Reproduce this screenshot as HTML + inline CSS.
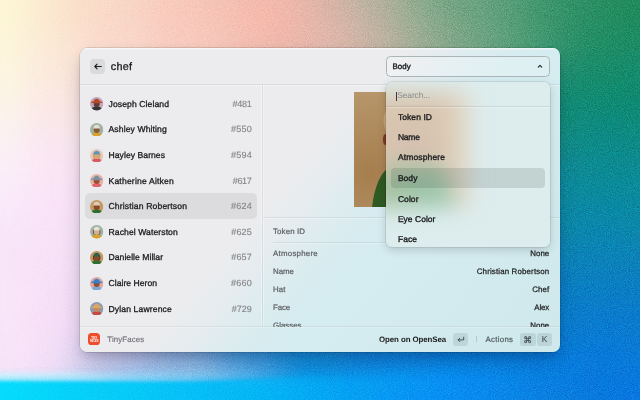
<!DOCTYPE html>
<html lang="en">
<head>
<meta charset="utf-8">
<title>TinyFaces – chef</title>
<style>
html,body{margin:0;padding:0;}
body{width:640px;height:400px;overflow:hidden;position:relative;background:#1a86a0;font-family:"Liberation Sans",sans-serif;}
.t{position:absolute;white-space:nowrap;color:#222;text-rendering:geometricPrecision;}
#shadow{position:absolute;left:80px;top:48.3px;width:480px;height:303.4px;border-radius:7px;box-shadow:0 11px 22px -3px rgba(0,0,30,0.22),0 4px 9px -2px rgba(10,0,50,0.14),0 0 0 0.5px rgba(0,0,0,0.20);}
#win{position:absolute;left:80px;top:48.3px;width:480px;height:303.4px;border-radius:7px;overflow:hidden;
 background:linear-gradient(130.5deg,#ececee 43%,#e5ecef 49.2%,#e0ecef 51.8%,#d7ecf0 58.7%,#d5ecf0 62%,#d3ebef 75%,#cfe8ec 100%);}
#inner{position:absolute;left:-80px;top:-48.3px;width:640px;height:400px;will-change:transform;}
#clip{position:absolute;left:0;top:0;width:640px;height:326.6px;overflow:hidden;}
.hl{position:absolute;background:rgba(0,0,0,0.065);height:1px;box-shadow:0 1px 0 rgba(255,255,255,0.3);}
.vl{position:absolute;background:rgba(0,0,0,0.065);width:1px;}
#back{position:absolute;left:90.2px;top:58.9px;width:15.3px;height:15px;border-radius:4px;background:#d9dbdb;}
.chef{color:#1a1a1c;-webkit-text-stroke:0.3px #1a1a1c;}
.sel{position:absolute;left:85px;top:193.4px;width:172px;height:25.2px;border-radius:5px;background:#dcdcde;}
.av{position:absolute;left:90.3px;}
.nm{color:#202022;-webkit-text-stroke:0.3px #202022;}
.tk{color:#868689;-webkit-text-stroke:0.15px #868689;}
.imgbox{position:absolute;left:353.6px;top:92.4px;width:115px;height:115px;overflow:hidden;background:#b0905f;}
.ml{color:#5e6064;-webkit-text-stroke:0.2px #5e6064;}
.mv{color:#1e2022;-webkit-text-stroke:0.25px #1e2022;}
#dd{position:absolute;left:386.2px;top:56.2px;width:163.4px;height:20.5px;box-sizing:border-box;border:1px solid #aab6b6;border-radius:4.5px;background:rgba(255,255,255,0.22);}
.ddt{color:#1a1a1c;-webkit-text-stroke:0.36px #1a1a1c;}
#popsh{position:absolute;left:385.6px;top:81.5px;width:164.5px;height:165.5px;border-radius:6px;box-shadow:0 0 0 0.6px rgba(0,0,0,0.15),0 3px 10px rgba(0,0,0,0.16);}
#pop{position:absolute;left:385.6px;top:81.5px;width:164.5px;height:165.5px;border-radius:6px;overflow:hidden;background:#d6ecef;}
#popin{position:absolute;left:-385.6px;top:-81.5px;width:640px;height:400px;}
#blurimg{filter:blur(11px);}
#veil{position:absolute;left:380px;top:76px;width:180px;height:180px;background:rgba(227,238,236,0.50);}
.pi{color:#1a1a1c;-webkit-text-stroke:0.34px #1a1a1c;}
.srch{color:#858b89;}
#psel{position:absolute;left:391px;top:168.1px;width:153.5px;height:20px;border-radius:4px;background:rgba(50,70,60,0.15);}
.ftl{color:#707276;-webkit-text-stroke:0.15px #707276;}
.fo{color:#1c1c1e;font-weight:bold;}
.fa{color:#525e62;-webkit-text-stroke:0.2px #525e62;}
.key{position:absolute;top:332.8px;height:12.9px;border-radius:3px;background:rgba(80,115,120,0.16);color:#465256;font-size:8.2px;line-height:12.9px;text-align:center;text-rendering:geometricPrecision;-webkit-text-stroke:0.15px #465256;}
#icon{position:absolute;left:87.9px;top:332.9px;width:12.5px;height:12.6px;border-radius:3.6px;background:#f04b2a;}
</style>
</head>
<body>
<svg id="bg" width="640" height="400" viewBox="0 0 640 400" style="position:absolute;left:0;top:0">
<defs><filter id="b" color-interpolation-filters="sRGB" x="-10%" y="-10%" width="120%" height="120%"><feGaussianBlur stdDeviation="16"/></filter>
<filter id="b2" color-interpolation-filters="sRGB" x="-20%" y="-50%" width="140%" height="200%"><feGaussianBlur stdDeviation="1.6"/></filter>
<filter id="b3" color-interpolation-filters="sRGB" x="-20%" y="-50%" width="140%" height="200%"><feGaussianBlur stdDeviation="9"/></filter>
<linearGradient id="wave" x1="0" x2="640" y1="0" y2="0" gradientUnits="userSpaceOnUse"><stop offset="0" stop-color="#04dcfc"/><stop offset="0.22" stop-color="#06c8f8"/><stop offset="0.47" stop-color="#04aaf4"/><stop offset="0.7" stop-color="#0890f4" stop-opacity="0.9"/><stop offset="0.95" stop-color="#0880e8" stop-opacity="0"/></linearGradient>
<linearGradient id="wave2" x1="0" x2="640" y1="0" y2="0" gradientUnits="userSpaceOnUse"><stop offset="0" stop-color="#04dcfc"/><stop offset="0.22" stop-color="#06c8f8"/><stop offset="0.33" stop-color="#05bcf6"/><stop offset="0.55" stop-color="#04aaf4" stop-opacity="0"/></linearGradient>
<filter id="b5" color-interpolation-filters="sRGB" x="-20%" y="-100%" width="140%" height="300%"><feGaussianBlur stdDeviation="7"/></filter>
<linearGradient id="haze" x1="0" x2="0" y1="350" y2="384" gradientUnits="userSpaceOnUse"><stop offset="0" stop-color="#9cc8f4" stop-opacity="0"/><stop offset="1" stop-color="#9cd0f8" stop-opacity="0.95"/></linearGradient>
<linearGradient id="hfade" x1="0" x2="640" y1="0" y2="0" gradientUnits="userSpaceOnUse"><stop offset="0.09" stop-color="#000"/><stop offset="0.22" stop-color="#fff"/><stop offset="0.30" stop-color="#fff"/><stop offset="0.48" stop-color="#000"/></linearGradient>
<mask id="hm"><rect x="-40" y="300" width="720" height="140" fill="url(#hfade)"/></mask>
<linearGradient id="glow" x1="0" x2="640" y1="0" y2="0" gradientUnits="userSpaceOnUse"><stop offset="0" stop-color="#fbf6ff" stop-opacity="0.95"/><stop offset="0.12" stop-color="#e6f2ff" stop-opacity="0.75"/><stop offset="0.2" stop-color="#c8e8ff" stop-opacity="0.5"/><stop offset="0.32" stop-color="#a0dcff" stop-opacity="0.2"/><stop offset="0.45" stop-color="#a0dcff" stop-opacity="0"/></linearGradient>
<filter id="b4" color-interpolation-filters="sRGB" x="-20%" y="-300%" width="140%" height="700%"><feGaussianBlur stdDeviation="2.5"/></filter>
<filter id="n" color-interpolation-filters="sRGB" x="0" y="0" width="100%" height="100%"><feTurbulence type="fractalNoise" baseFrequency="1.05" numOctaves="2" seed="7" result="t"/><feColorMatrix in="t" type="matrix" values="0.6 0.3 0.1 0 0  0.6 0.3 0.1 0 0  0.6 0.3 0.1 0 0  0 0 0 0 1"/><feComponentTransfer><feFuncR type="linear" slope="2.6" intercept="-0.8"/><feFuncG type="linear" slope="2.6" intercept="-0.8"/><feFuncB type="linear" slope="2.6" intercept="-0.8"/></feComponentTransfer></filter>
</defs>
<g filter="url(#b)">
<rect x="-40" y="-40" width="33" height="33" fill="#fcf5d5"/>
<rect x="-8" y="-40" width="33" height="33" fill="#fcf5d4"/>
<rect x="24" y="-40" width="33" height="33" fill="#fbedd2"/>
<rect x="56" y="-40" width="33" height="33" fill="#f9e3ce"/>
<rect x="88" y="-40" width="33" height="33" fill="#f8dcca"/>
<rect x="120" y="-40" width="33" height="33" fill="#f6d5c6"/>
<rect x="152" y="-40" width="33" height="33" fill="#f4ccbf"/>
<rect x="184" y="-40" width="33" height="33" fill="#f2c6b9"/>
<rect x="216" y="-40" width="33" height="33" fill="#edbfb2"/>
<rect x="248" y="-40" width="33" height="33" fill="#e9b8ab"/>
<rect x="280" y="-40" width="33" height="33" fill="#e5b5a8"/>
<rect x="312" y="-40" width="33" height="33" fill="#d8b4a6"/>
<rect x="344" y="-40" width="33" height="33" fill="#b2b19d"/>
<rect x="376" y="-40" width="33" height="33" fill="#a7af99"/>
<rect x="408" y="-40" width="33" height="33" fill="#79a586"/>
<rect x="440" y="-40" width="33" height="33" fill="#70a382"/>
<rect x="472" y="-40" width="33" height="33" fill="#6aa181"/>
<rect x="504" y="-40" width="33" height="33" fill="#549c78"/>
<rect x="536" y="-40" width="33" height="33" fill="#429770"/>
<rect x="568" y="-40" width="33" height="33" fill="#339169"/>
<rect x="600" y="-40" width="33" height="33" fill="#258d5f"/>
<rect x="632" y="-40" width="33" height="33" fill="#208b5b"/>
<rect x="664" y="-40" width="33" height="33" fill="#258d62"/>
<rect x="-40" y="-8" width="33" height="33" fill="#fcf6d5"/>
<rect x="-8" y="-8" width="33" height="33" fill="#fdf7d5"/>
<rect x="24" y="-8" width="33" height="33" fill="#fcecd1"/>
<rect x="56" y="-8" width="33" height="33" fill="#fbe0ca"/>
<rect x="88" y="-8" width="33" height="33" fill="#fad9c7"/>
<rect x="120" y="-8" width="33" height="33" fill="#f9d4c5"/>
<rect x="152" y="-8" width="33" height="33" fill="#f9c9bb"/>
<rect x="184" y="-8" width="33" height="33" fill="#fac6b8"/>
<rect x="216" y="-8" width="33" height="33" fill="#f5beb1"/>
<rect x="248" y="-8" width="33" height="33" fill="#f9b9ac"/>
<rect x="280" y="-8" width="33" height="33" fill="#eeb7aa"/>
<rect x="312" y="-8" width="33" height="33" fill="#dcb4a8"/>
<rect x="344" y="-8" width="33" height="33" fill="#c4b2a1"/>
<rect x="376" y="-8" width="33" height="33" fill="#abb09a"/>
<rect x="408" y="-8" width="33" height="33" fill="#8baa8e"/>
<rect x="440" y="-8" width="33" height="33" fill="#6ea381"/>
<rect x="472" y="-8" width="33" height="33" fill="#65a17e"/>
<rect x="504" y="-8" width="33" height="33" fill="#4c9a72"/>
<rect x="536" y="-8" width="33" height="33" fill="#389469"/>
<rect x="568" y="-8" width="33" height="33" fill="#2c8f63"/>
<rect x="600" y="-8" width="33" height="33" fill="#238c5d"/>
<rect x="632" y="-8" width="33" height="33" fill="#1e8a58"/>
<rect x="664" y="-8" width="33" height="33" fill="#228c62"/>
<rect x="-40" y="24" width="33" height="33" fill="#fcf4da"/>
<rect x="-8" y="24" width="33" height="33" fill="#fdf6da"/>
<rect x="24" y="24" width="33" height="33" fill="#fcecd7"/>
<rect x="56" y="24" width="33" height="33" fill="#fbe3d0"/>
<rect x="88" y="24" width="33" height="33" fill="#fad9cb"/>
<rect x="120" y="24" width="33" height="33" fill="#fad7ca"/>
<rect x="152" y="24" width="33" height="33" fill="#f8cbbe"/>
<rect x="184" y="24" width="33" height="33" fill="#f8cabe"/>
<rect x="216" y="24" width="33" height="33" fill="#f5c2b6"/>
<rect x="248" y="24" width="33" height="33" fill="#f6b9ad"/>
<rect x="280" y="24" width="33" height="33" fill="#edb7ab"/>
<rect x="312" y="24" width="33" height="33" fill="#e3b8ac"/>
<rect x="344" y="24" width="33" height="33" fill="#d1b5a6"/>
<rect x="376" y="24" width="33" height="33" fill="#b9b2a0"/>
<rect x="408" y="24" width="33" height="33" fill="#99ac94"/>
<rect x="440" y="24" width="33" height="33" fill="#82a889"/>
<rect x="472" y="24" width="33" height="33" fill="#6aa281"/>
<rect x="504" y="24" width="33" height="33" fill="#55a078"/>
<rect x="536" y="24" width="33" height="33" fill="#3c956d"/>
<rect x="568" y="24" width="33" height="33" fill="#268e66"/>
<rect x="600" y="24" width="33" height="33" fill="#1f8c63"/>
<rect x="632" y="24" width="33" height="33" fill="#1f8c65"/>
<rect x="664" y="24" width="33" height="33" fill="#208d6b"/>
<rect x="-40" y="56" width="33" height="33" fill="#fcf4e1"/>
<rect x="-8" y="56" width="33" height="33" fill="#fdf8df"/>
<rect x="24" y="56" width="33" height="33" fill="#fcebdd"/>
<rect x="56" y="56" width="33" height="33" fill="#fae7db"/>
<rect x="88" y="56" width="33" height="33" fill="#f9dbcf"/>
<rect x="120" y="56" width="33" height="33" fill="#f8d7cb"/>
<rect x="152" y="56" width="33" height="33" fill="#f5cec3"/>
<rect x="184" y="56" width="33" height="33" fill="#f6cabe"/>
<rect x="216" y="56" width="33" height="33" fill="#f0c5b9"/>
<rect x="248" y="56" width="33" height="33" fill="#e6bcb0"/>
<rect x="280" y="56" width="33" height="33" fill="#deb8ac"/>
<rect x="312" y="56" width="33" height="33" fill="#ddb7ab"/>
<rect x="344" y="56" width="33" height="33" fill="#ceb5a7"/>
<rect x="376" y="56" width="33" height="33" fill="#b6b1a0"/>
<rect x="408" y="56" width="33" height="33" fill="#9ead97"/>
<rect x="440" y="56" width="33" height="33" fill="#82a78b"/>
<rect x="472" y="56" width="33" height="33" fill="#69a283"/>
<rect x="504" y="56" width="33" height="33" fill="#4f9d79"/>
<rect x="536" y="56" width="33" height="33" fill="#289175"/>
<rect x="568" y="56" width="33" height="33" fill="#198c6c"/>
<rect x="600" y="56" width="33" height="33" fill="#178b69"/>
<rect x="632" y="56" width="33" height="33" fill="#138b70"/>
<rect x="664" y="56" width="33" height="33" fill="#188c73"/>
<rect x="-40" y="88" width="33" height="33" fill="#fbf2e9"/>
<rect x="-8" y="88" width="33" height="33" fill="#fcf6e8"/>
<rect x="24" y="88" width="33" height="33" fill="#fce8e6"/>
<rect x="56" y="88" width="33" height="33" fill="#fae8e4"/>
<rect x="88" y="88" width="33" height="33" fill="#f7e1db"/>
<rect x="120" y="88" width="33" height="33" fill="#f3d9d2"/>
<rect x="152" y="88" width="33" height="33" fill="#efd1c9"/>
<rect x="184" y="88" width="33" height="33" fill="#ebcac2"/>
<rect x="216" y="88" width="33" height="33" fill="#e3c4bc"/>
<rect x="248" y="88" width="33" height="33" fill="#d8beb5"/>
<rect x="280" y="88" width="33" height="33" fill="#ceb9b0"/>
<rect x="312" y="88" width="33" height="33" fill="#c7b6ab"/>
<rect x="344" y="88" width="33" height="33" fill="#bbb3a6"/>
<rect x="376" y="88" width="33" height="33" fill="#a8af9f"/>
<rect x="408" y="88" width="33" height="33" fill="#92aa97"/>
<rect x="440" y="88" width="33" height="33" fill="#79a58f"/>
<rect x="472" y="88" width="33" height="33" fill="#5b9e86"/>
<rect x="504" y="88" width="33" height="33" fill="#32937c"/>
<rect x="536" y="88" width="33" height="33" fill="#0f8a74"/>
<rect x="568" y="88" width="33" height="33" fill="#108b74"/>
<rect x="600" y="88" width="33" height="33" fill="#0d8a72"/>
<rect x="632" y="88" width="33" height="33" fill="#0c8a70"/>
<rect x="664" y="88" width="33" height="33" fill="#138b77"/>
<rect x="-40" y="120" width="33" height="33" fill="#faf0f1"/>
<rect x="-8" y="120" width="33" height="33" fill="#fbf3f3"/>
<rect x="24" y="120" width="33" height="33" fill="#fbe8f1"/>
<rect x="56" y="120" width="33" height="33" fill="#f9e7ed"/>
<rect x="88" y="120" width="33" height="33" fill="#f5e3e6"/>
<rect x="120" y="120" width="33" height="33" fill="#efdcdc"/>
<rect x="152" y="120" width="33" height="33" fill="#e8d4d2"/>
<rect x="184" y="120" width="33" height="33" fill="#dfccc9"/>
<rect x="216" y="120" width="33" height="33" fill="#d4c4c2"/>
<rect x="248" y="120" width="33" height="33" fill="#c7bfbc"/>
<rect x="280" y="120" width="33" height="33" fill="#bcbcba"/>
<rect x="312" y="120" width="33" height="33" fill="#b4b9b6"/>
<rect x="344" y="120" width="33" height="33" fill="#aab4ae"/>
<rect x="376" y="120" width="33" height="33" fill="#99aea4"/>
<rect x="408" y="120" width="33" height="33" fill="#84a79c"/>
<rect x="440" y="120" width="33" height="33" fill="#69a195"/>
<rect x="472" y="120" width="33" height="33" fill="#4b998e"/>
<rect x="504" y="120" width="33" height="33" fill="#2b9187"/>
<rect x="536" y="120" width="33" height="33" fill="#188c81"/>
<rect x="568" y="120" width="33" height="33" fill="#0e8b85"/>
<rect x="600" y="120" width="33" height="33" fill="#0c8a87"/>
<rect x="632" y="120" width="33" height="33" fill="#108b7f"/>
<rect x="664" y="120" width="33" height="33" fill="#138b83"/>
<rect x="-40" y="152" width="33" height="33" fill="#faedf6"/>
<rect x="-8" y="152" width="33" height="33" fill="#fbeff8"/>
<rect x="24" y="152" width="33" height="33" fill="#fbe7f4"/>
<rect x="56" y="152" width="33" height="33" fill="#f9e5f4"/>
<rect x="88" y="152" width="33" height="33" fill="#f6e2f0"/>
<rect x="120" y="152" width="33" height="33" fill="#eddde6"/>
<rect x="152" y="152" width="33" height="33" fill="#e1d4db"/>
<rect x="184" y="152" width="33" height="33" fill="#d4ccd0"/>
<rect x="216" y="152" width="33" height="33" fill="#c5c4c9"/>
<rect x="248" y="152" width="33" height="33" fill="#b7c1c6"/>
<rect x="280" y="152" width="33" height="33" fill="#b0c3c9"/>
<rect x="312" y="152" width="33" height="33" fill="#aec4cb"/>
<rect x="344" y="152" width="33" height="33" fill="#a3bbbf"/>
<rect x="376" y="152" width="33" height="33" fill="#8daeb0"/>
<rect x="408" y="152" width="33" height="33" fill="#74a5a5"/>
<rect x="440" y="152" width="33" height="33" fill="#599d9e"/>
<rect x="472" y="152" width="33" height="33" fill="#3b9599"/>
<rect x="504" y="152" width="33" height="33" fill="#218e98"/>
<rect x="536" y="152" width="33" height="33" fill="#128b9a"/>
<rect x="568" y="152" width="33" height="33" fill="#0d8a92"/>
<rect x="600" y="152" width="33" height="33" fill="#0b8a90"/>
<rect x="632" y="152" width="33" height="33" fill="#0d8a97"/>
<rect x="664" y="152" width="33" height="33" fill="#118a95"/>
<rect x="-40" y="184" width="33" height="33" fill="#f9eaf8"/>
<rect x="-8" y="184" width="33" height="33" fill="#fbecfc"/>
<rect x="24" y="184" width="33" height="33" fill="#fae4fa"/>
<rect x="56" y="184" width="33" height="33" fill="#f9e2f8"/>
<rect x="88" y="184" width="33" height="33" fill="#f7e2f6"/>
<rect x="120" y="184" width="33" height="33" fill="#ecddec"/>
<rect x="152" y="184" width="33" height="33" fill="#dbd4e1"/>
<rect x="184" y="184" width="33" height="33" fill="#c9cad7"/>
<rect x="216" y="184" width="33" height="33" fill="#b8c3cf"/>
<rect x="248" y="184" width="33" height="33" fill="#adc1cc"/>
<rect x="280" y="184" width="33" height="33" fill="#afc7cf"/>
<rect x="312" y="184" width="33" height="33" fill="#b0c8d0"/>
<rect x="344" y="184" width="33" height="33" fill="#a4c0c9"/>
<rect x="376" y="184" width="33" height="33" fill="#84aeba"/>
<rect x="408" y="184" width="33" height="33" fill="#65a2af"/>
<rect x="440" y="184" width="33" height="33" fill="#4a98a8"/>
<rect x="472" y="184" width="33" height="33" fill="#2f91a4"/>
<rect x="504" y="184" width="33" height="33" fill="#168ba2"/>
<rect x="536" y="184" width="33" height="33" fill="#0b8aa2"/>
<rect x="568" y="184" width="33" height="33" fill="#0b8aa1"/>
<rect x="600" y="184" width="33" height="33" fill="#0a8aa0"/>
<rect x="632" y="184" width="33" height="33" fill="#0a8a9e"/>
<rect x="664" y="184" width="33" height="33" fill="#0e899f"/>
<rect x="-40" y="216" width="33" height="33" fill="#f7e7f6"/>
<rect x="-8" y="216" width="33" height="33" fill="#f8e6f8"/>
<rect x="24" y="216" width="33" height="33" fill="#f8e3f8"/>
<rect x="56" y="216" width="33" height="33" fill="#f7e2f7"/>
<rect x="88" y="216" width="33" height="33" fill="#f2e0f4"/>
<rect x="120" y="216" width="33" height="33" fill="#e5d9ed"/>
<rect x="152" y="216" width="33" height="33" fill="#d1d0e4"/>
<rect x="184" y="216" width="33" height="33" fill="#bbc6db"/>
<rect x="216" y="216" width="33" height="33" fill="#a7bed4"/>
<rect x="248" y="216" width="33" height="33" fill="#9fbccf"/>
<rect x="280" y="216" width="33" height="33" fill="#a5c2ce"/>
<rect x="312" y="216" width="33" height="33" fill="#a7c3ce"/>
<rect x="344" y="216" width="33" height="33" fill="#93b9c9"/>
<rect x="376" y="216" width="33" height="33" fill="#70a8c0"/>
<rect x="408" y="216" width="33" height="33" fill="#549cb9"/>
<rect x="440" y="216" width="33" height="33" fill="#3c94b3"/>
<rect x="472" y="216" width="33" height="33" fill="#278daf"/>
<rect x="504" y="216" width="33" height="33" fill="#1789ab"/>
<rect x="536" y="216" width="33" height="33" fill="#0e88a8"/>
<rect x="568" y="216" width="33" height="33" fill="#0b86ae"/>
<rect x="600" y="216" width="33" height="33" fill="#0b85b0"/>
<rect x="632" y="216" width="33" height="33" fill="#0c87a7"/>
<rect x="664" y="216" width="33" height="33" fill="#0f87a8"/>
<rect x="-40" y="248" width="33" height="33" fill="#f6e4f7"/>
<rect x="-8" y="248" width="33" height="33" fill="#f8e4f8"/>
<rect x="24" y="248" width="33" height="33" fill="#f9e2f9"/>
<rect x="56" y="248" width="33" height="33" fill="#f4e0f6"/>
<rect x="88" y="248" width="33" height="33" fill="#ebdbf2"/>
<rect x="120" y="248" width="33" height="33" fill="#dad4ec"/>
<rect x="152" y="248" width="33" height="33" fill="#c2c9e5"/>
<rect x="184" y="248" width="33" height="33" fill="#a7bede"/>
<rect x="216" y="248" width="33" height="33" fill="#8fb5d8"/>
<rect x="248" y="248" width="33" height="33" fill="#80b1d4"/>
<rect x="280" y="248" width="33" height="33" fill="#7db0d1"/>
<rect x="312" y="248" width="33" height="33" fill="#79afce"/>
<rect x="344" y="248" width="33" height="33" fill="#68a7cc"/>
<rect x="376" y="248" width="33" height="33" fill="#519dc8"/>
<rect x="408" y="248" width="33" height="33" fill="#3e95c4"/>
<rect x="440" y="248" width="33" height="33" fill="#2e8ec0"/>
<rect x="472" y="248" width="33" height="33" fill="#2089bd"/>
<rect x="504" y="248" width="33" height="33" fill="#1484bc"/>
<rect x="536" y="248" width="33" height="33" fill="#0e81bd"/>
<rect x="568" y="248" width="33" height="33" fill="#0b81ba"/>
<rect x="600" y="248" width="33" height="33" fill="#0b81b9"/>
<rect x="632" y="248" width="33" height="33" fill="#0c80bd"/>
<rect x="664" y="248" width="33" height="33" fill="#0e82b9"/>
<rect x="-40" y="280" width="33" height="33" fill="#f8e5f8"/>
<rect x="-8" y="280" width="33" height="33" fill="#fae8fa"/>
<rect x="24" y="280" width="33" height="33" fill="#f7e1f8"/>
<rect x="56" y="280" width="33" height="33" fill="#f3ddf6"/>
<rect x="88" y="280" width="33" height="33" fill="#ebd9f3"/>
<rect x="120" y="280" width="33" height="33" fill="#d1ceec"/>
<rect x="152" y="280" width="33" height="33" fill="#b0c0e4"/>
<rect x="184" y="280" width="33" height="33" fill="#8fb4de"/>
<rect x="216" y="280" width="33" height="33" fill="#6fa9db"/>
<rect x="248" y="280" width="33" height="33" fill="#58a2d8"/>
<rect x="280" y="280" width="33" height="33" fill="#499ed6"/>
<rect x="312" y="280" width="33" height="33" fill="#439bd5"/>
<rect x="344" y="280" width="33" height="33" fill="#3a96d4"/>
<rect x="376" y="280" width="33" height="33" fill="#3091d3"/>
<rect x="408" y="280" width="33" height="33" fill="#278dd1"/>
<rect x="440" y="280" width="33" height="33" fill="#1e88ce"/>
<rect x="472" y="280" width="33" height="33" fill="#1785ca"/>
<rect x="504" y="280" width="33" height="33" fill="#0f80c6"/>
<rect x="536" y="280" width="33" height="33" fill="#0a7cc6"/>
<rect x="568" y="280" width="33" height="33" fill="#0a7dc5"/>
<rect x="600" y="280" width="33" height="33" fill="#0a7cc5"/>
<rect x="632" y="280" width="33" height="33" fill="#0a7cc8"/>
<rect x="664" y="280" width="33" height="33" fill="#0d7ec4"/>
<rect x="-40" y="312" width="33" height="33" fill="#f7e4f8"/>
<rect x="-8" y="312" width="33" height="33" fill="#f8e5f9"/>
<rect x="24" y="312" width="33" height="33" fill="#f8e0f8"/>
<rect x="56" y="312" width="33" height="33" fill="#f3dcf6"/>
<rect x="88" y="312" width="33" height="33" fill="#e8d7f3"/>
<rect x="120" y="312" width="33" height="33" fill="#c3c4e8"/>
<rect x="152" y="312" width="33" height="33" fill="#9ab4df"/>
<rect x="184" y="312" width="33" height="33" fill="#7caadc"/>
<rect x="216" y="312" width="33" height="33" fill="#4c9ddc"/>
<rect x="248" y="312" width="33" height="33" fill="#3897db"/>
<rect x="280" y="312" width="33" height="33" fill="#1d91d9"/>
<rect x="312" y="312" width="33" height="33" fill="#1f90da"/>
<rect x="344" y="312" width="33" height="33" fill="#1a8bdc"/>
<rect x="376" y="312" width="33" height="33" fill="#1688dc"/>
<rect x="408" y="312" width="33" height="33" fill="#1586db"/>
<rect x="440" y="312" width="33" height="33" fill="#0f83dc"/>
<rect x="472" y="312" width="33" height="33" fill="#0f82d7"/>
<rect x="504" y="312" width="33" height="33" fill="#0d7fd3"/>
<rect x="536" y="312" width="33" height="33" fill="#0b7dcd"/>
<rect x="568" y="312" width="33" height="33" fill="#0a7bd0"/>
<rect x="600" y="312" width="33" height="33" fill="#097ad3"/>
<rect x="632" y="312" width="33" height="33" fill="#0b7cca"/>
<rect x="664" y="312" width="33" height="33" fill="#0d7dc9"/>
<rect x="-40" y="344" width="33" height="33" fill="#f6e4f8"/>
<rect x="-8" y="344" width="33" height="33" fill="#f9e6fa"/>
<rect x="24" y="344" width="33" height="33" fill="#f6e0f8"/>
<rect x="56" y="344" width="33" height="33" fill="#e4d8f4"/>
<rect x="88" y="344" width="33" height="33" fill="#d6ceee"/>
<rect x="120" y="344" width="33" height="33" fill="#c0bee6"/>
<rect x="152" y="344" width="33" height="33" fill="#88abd9"/>
<rect x="184" y="344" width="33" height="33" fill="#7fa9d9"/>
<rect x="216" y="344" width="33" height="33" fill="#3896dc"/>
<rect x="248" y="344" width="33" height="33" fill="#3095dc"/>
<rect x="280" y="344" width="33" height="33" fill="#0c8cd8"/>
<rect x="312" y="344" width="33" height="33" fill="#128ddb"/>
<rect x="344" y="344" width="33" height="33" fill="#0e85df"/>
<rect x="376" y="344" width="33" height="33" fill="#0c84e0"/>
<rect x="408" y="344" width="33" height="33" fill="#0d83df"/>
<rect x="440" y="344" width="33" height="33" fill="#0880e0"/>
<rect x="472" y="344" width="33" height="33" fill="#0a81de"/>
<rect x="504" y="344" width="33" height="33" fill="#097dde"/>
<rect x="536" y="344" width="33" height="33" fill="#087cdf"/>
<rect x="568" y="344" width="33" height="33" fill="#097ad9"/>
<rect x="600" y="344" width="33" height="33" fill="#0979da"/>
<rect x="632" y="344" width="33" height="33" fill="#0a7ad7"/>
<rect x="664" y="344" width="33" height="33" fill="#0c7bd2"/>
<rect x="-40" y="376" width="33" height="33" fill="#f2e1f6"/>
<rect x="-8" y="376" width="33" height="33" fill="#f3e1f7"/>
<rect x="24" y="376" width="33" height="33" fill="#f2dff7"/>
<rect x="56" y="376" width="33" height="33" fill="#e5d8f4"/>
<rect x="88" y="376" width="33" height="33" fill="#d3cdee"/>
<rect x="120" y="376" width="33" height="33" fill="#bbbfe6"/>
<rect x="152" y="376" width="33" height="33" fill="#94b0dd"/>
<rect x="184" y="376" width="33" height="33" fill="#77a8db"/>
<rect x="216" y="376" width="33" height="33" fill="#439adc"/>
<rect x="248" y="376" width="33" height="33" fill="#2592e0"/>
<rect x="280" y="376" width="33" height="33" fill="#0c8ce8"/>
<rect x="312" y="376" width="33" height="33" fill="#118de3"/>
<rect x="344" y="376" width="33" height="33" fill="#1288df"/>
<rect x="376" y="376" width="33" height="33" fill="#0f85e0"/>
<rect x="408" y="376" width="33" height="33" fill="#0b84e3"/>
<rect x="440" y="376" width="33" height="33" fill="#0884e6"/>
<rect x="472" y="376" width="33" height="33" fill="#0b82e0"/>
<rect x="504" y="376" width="33" height="33" fill="#0b7edd"/>
<rect x="536" y="376" width="33" height="33" fill="#0a7cdd"/>
<rect x="568" y="376" width="33" height="33" fill="#0979de"/>
<rect x="600" y="376" width="33" height="33" fill="#0878e0"/>
<rect x="632" y="376" width="33" height="33" fill="#0876e2"/>
<rect x="664" y="376" width="33" height="33" fill="#0b79db"/>
<rect x="-40" y="408" width="33" height="33" fill="#ebddf4"/>
<rect x="-8" y="408" width="33" height="33" fill="#ebddf4"/>
<rect x="24" y="408" width="33" height="33" fill="#e8daf4"/>
<rect x="56" y="408" width="33" height="33" fill="#ded5f1"/>
<rect x="88" y="408" width="33" height="33" fill="#ceccec"/>
<rect x="120" y="408" width="33" height="33" fill="#b7c1e7"/>
<rect x="152" y="408" width="33" height="33" fill="#99b6e1"/>
<rect x="184" y="408" width="33" height="33" fill="#77aade"/>
<rect x="216" y="408" width="33" height="33" fill="#4e9ede"/>
<rect x="248" y="408" width="33" height="33" fill="#2593e2"/>
<rect x="280" y="408" width="33" height="33" fill="#118de6"/>
<rect x="312" y="408" width="33" height="33" fill="#158ee4"/>
<rect x="344" y="408" width="33" height="33" fill="#1a8cdf"/>
<rect x="376" y="408" width="33" height="33" fill="#1588df"/>
<rect x="408" y="408" width="33" height="33" fill="#0d85e3"/>
<rect x="440" y="408" width="33" height="33" fill="#0a84e4"/>
<rect x="472" y="408" width="33" height="33" fill="#0d83e0"/>
<rect x="504" y="408" width="33" height="33" fill="#0f81db"/>
<rect x="536" y="408" width="33" height="33" fill="#0e7eda"/>
<rect x="568" y="408" width="33" height="33" fill="#0b7bdb"/>
<rect x="600" y="408" width="33" height="33" fill="#0a78df"/>
<rect x="632" y="408" width="33" height="33" fill="#0977e0"/>
<rect x="664" y="408" width="33" height="33" fill="#0b79dc"/>
</g>
<g mask="url(#hm)"><rect x="-20" y="346" width="420" height="44" fill="url(#haze)" filter="url(#b3)"/></g>
<path d="M-40 377.5 C 60 377.5, 120 378.5, 180 378 S 300 373, 420 365" fill="none" stroke="url(#glow)" stroke-width="9" filter="url(#b4)"/>
<path d="M-40 381.5 C 60 381.5, 120 382.5, 180 382 S 300 377, 420 369 S 600 351, 700 341 L 700 460 L -40 460 Z" fill="url(#wave)" filter="url(#b5)"/>
<path d="M-40 381.5 C 60 381.5, 120 382.5, 180 382 S 300 377, 420 369 S 600 351, 700 341 L 700 440 L -40 440 Z" fill="url(#wave2)" filter="url(#b2)"/>
<rect width="640" height="400" filter="url(#n)" opacity="0.18" style="mix-blend-mode:overlay"/>
</svg>
<svg width="0" height="0" style="position:absolute"><defs>
<g id="face">
<radialGradient id="tg" cx="0.15" cy="0.7" r="0.7"><stop offset="0" stop-color="#a67e4e"/><stop offset="1" stop-color="#b6966a"/></radialGradient><rect width="115" height="115" fill="url(#tg)"/>
<path d="M18 116 C20 96 26 82 34 76 L82 76 C90 82 96 96 98 116Z" fill="#2f5a22"/>
<ellipse cx="58" cy="52" rx="26" ry="22" fill="#9a6a44"/>
<ellipse cx="31.5" cy="47.5" rx="2.6" ry="5.6" fill="#7e3826"/>
<ellipse cx="84.5" cy="47.5" rx="2.6" ry="5.6" fill="#7e3826"/>
<path d="M32 40 C14 -6 102 -6 84 40Z" fill="#c6a67c"/>
</g></defs></svg>
<div id="shadow"></div>
<div id="win"><div id="inner">
<div class="hl" style="left:80px;top:48.3px;width:480px;background:rgba(255,255,255,0.55)"></div>
<div class="hl" style="left:80px;top:83.7px;width:480px"></div>
<div id="back"><svg width="15.3" height="15" viewBox="0 0 15.3 15" style="position:absolute;left:0;top:0"><path d="M11.3 7.5H4.9M7.1 5.2L4.8 7.5L7.1 9.8" fill="none" stroke="#1c1c1e" stroke-width="1.15" stroke-linecap="round" stroke-linejoin="round"/></svg></div>
<div class="sel"></div>
<svg class="av" style="top:97.3px" width="13.4" height="13.4" viewBox="0 0 20 20"><clipPath id="c0"><circle cx="10" cy="10" r="10"/></clipPath><g clip-path="url(#c0)"><rect width="20" height="20" fill="#c4a6b8"/><ellipse cx="10" cy="20.5" rx="8.2" ry="6.6" fill="#333436"/><ellipse cx="10" cy="10.6" rx="4.5" ry="4.3" fill="#5c3c34"/><path d="M5.4 8.2C4.2 0.8 15.8 0.8 14.6 8.2Z" fill="#b4482c"/><ellipse cx="10" cy="7.8" rx="8.6" ry="1.7" fill="#b4482c"/></g></svg>
<svg class="av" style="top:122.9px" width="13.4" height="13.4" viewBox="0 0 20 20"><clipPath id="c1"><circle cx="10" cy="10" r="10"/></clipPath><g clip-path="url(#c1)"><rect width="20" height="20" fill="#a2b2a2"/><ellipse cx="10" cy="20.5" rx="8.2" ry="6.6" fill="#d8a22c"/><ellipse cx="10" cy="10.6" rx="4.5" ry="4.3" fill="#8a5a38"/><path d="M5.4 8.2C4.2 0.8 15.8 0.8 14.6 8.2Z" fill="#e2ded2"/></g></svg>
<svg class="av" style="top:148.5px" width="13.4" height="13.4" viewBox="0 0 20 20"><clipPath id="c2"><circle cx="10" cy="10" r="10"/></clipPath><g clip-path="url(#c2)"><rect width="20" height="20" fill="#e8c8ba"/><ellipse cx="10" cy="20.5" rx="8.2" ry="6.6" fill="#d85866"/><rect x="4.6" y="5.5" width="10.8" height="9" rx="3" fill="#d89048"/><ellipse cx="10" cy="10.6" rx="4.5" ry="4.3" fill="#d8a878"/><path d="M5.4 8.2C4.2 0.8 15.8 0.8 14.6 8.2Z" fill="#5a98b8"/></g></svg>
<svg class="av" style="top:174.1px" width="13.4" height="13.4" viewBox="0 0 20 20"><clipPath id="c3"><circle cx="10" cy="10" r="10"/></clipPath><g clip-path="url(#c3)"><rect width="20" height="20" fill="#e6b2aa"/><ellipse cx="10" cy="20.5" rx="8.2" ry="6.6" fill="#e0646c"/><ellipse cx="10" cy="10.6" rx="4.5" ry="4.3" fill="#a05030"/><path d="M5.4 8.2C4.2 0.8 15.8 0.8 14.6 8.2Z" fill="#7a90a0"/><ellipse cx="10" cy="7.8" rx="8.6" ry="1.7" fill="#7a90a0"/></g></svg>
<svg class="av" style="top:199.7px" width="13.4" height="13.4" viewBox="0 0 20 20"><clipPath id="c4"><circle cx="10" cy="10" r="10"/></clipPath><g clip-path="url(#c4)"><rect width="20" height="20" fill="#c29a62"/><ellipse cx="10" cy="20.5" rx="8.2" ry="6.6" fill="#2a7030"/><ellipse cx="10" cy="10.6" rx="4.5" ry="4.3" fill="#8a4a28"/><path d="M5.4 8.2C4.2 0.8 15.8 0.8 14.6 8.2Z" fill="#dccdbc"/></g></svg>
<svg class="av" style="top:225.3px" width="13.4" height="13.4" viewBox="0 0 20 20"><clipPath id="c5"><circle cx="10" cy="10" r="10"/></clipPath><g clip-path="url(#c5)"><rect width="20" height="20" fill="#a2b2a4"/><ellipse cx="10" cy="20.5" rx="8.2" ry="6.6" fill="#d8a22c"/><rect x="4.6" y="5.5" width="10.8" height="9" rx="3" fill="#303840"/><ellipse cx="10" cy="10.6" rx="4.5" ry="4.3" fill="#d8b088"/><path d="M5.4 8.2C4.2 0.8 15.8 0.8 14.6 8.2Z" fill="#e6e2d4"/></g></svg>
<svg class="av" style="top:250.9px" width="13.4" height="13.4" viewBox="0 0 20 20"><clipPath id="c6"><circle cx="10" cy="10" r="10"/></clipPath><g clip-path="url(#c6)"><rect width="20" height="20" fill="#c09860"/><ellipse cx="10" cy="20.5" rx="8.2" ry="6.6" fill="#2a7030"/><rect x="4.6" y="5.5" width="10.8" height="9" rx="3" fill="#3a3028"/><ellipse cx="10" cy="10.6" rx="4.5" ry="4.3" fill="#8a4a28"/><path d="M5.4 8.2C4.2 0.8 15.8 0.8 14.6 8.2Z" fill="#306050"/></g></svg>
<svg class="av" style="top:276.5px" width="13.4" height="13.4" viewBox="0 0 20 20"><clipPath id="c7"><circle cx="10" cy="10" r="10"/></clipPath><g clip-path="url(#c7)"><rect width="20" height="20" fill="#e0aaa2"/><ellipse cx="10" cy="20.5" rx="8.2" ry="6.6" fill="#78a8d8"/><ellipse cx="10" cy="10.6" rx="4.5" ry="4.3" fill="#8a5038"/><path d="M5.4 8.2C4.2 0.8 15.8 0.8 14.6 8.2Z" fill="#3880c8"/><ellipse cx="10" cy="7.8" rx="8.6" ry="1.7" fill="#3880c8"/></g></svg>
<svg class="av" style="top:302.1px" width="13.4" height="13.4" viewBox="0 0 20 20"><clipPath id="c8"><circle cx="10" cy="10" r="10"/></clipPath><g clip-path="url(#c8)"><rect width="20" height="20" fill="#8c9ab2"/><ellipse cx="10" cy="20.5" rx="8.2" ry="6.6" fill="#c84840"/><ellipse cx="10" cy="10.6" rx="4.5" ry="4.3" fill="#c88858"/><path d="M5.4 8.2C4.2 0.8 15.8 0.8 14.6 8.2Z" fill="#d8a868"/><ellipse cx="10" cy="7.8" rx="8.6" ry="1.7" fill="#d8a868"/></g></svg>
<div class="vl" style="left:262.1px;top:84.7px;height:241.5px;box-shadow:1px 0 0 rgba(255,255,255,0.35),-1px 0 0 rgba(255,255,255,0.3)"></div>
<div class="imgbox"><svg width="115" height="115" viewBox="0 0 115 115"><use href="#face"/></svg></div>
<div class="hl" style="left:263px;top:217.3px;width:297px"></div>
<div class="hl" style="left:273px;top:242.1px;width:277px"></div>
<div class="hl" style="left:80px;top:326.2px;width:480px;background:rgba(0,0,0,0.055);box-shadow:0 1px 0 rgba(255,255,255,0.22)"></div>
<div id="icon"><svg width="12.4" height="12.5" viewBox="0 0 12.4 12.5"><text x="6.2" y="5.5" font-size="2.6" font-weight="bold" text-anchor="middle" fill="#fff" font-family="Liberation Sans, sans-serif">TINY</text><text x="6.2" y="8.1" font-size="2.6" font-weight="bold" text-anchor="middle" fill="#fff" font-family="Liberation Sans, sans-serif">FACES</text></svg></div>
<div class="key" style="left:453.2px;width:14.9px"><svg width="14.9" height="12.9" viewBox="0 0 14.9 12.9" style="position:absolute;left:0;top:0"><path d="M10.7 4.2V6.9H5.2M6.8 5.2L5.1 6.9L6.8 8.6" fill="none" stroke="#3e4a4e" stroke-width="0.95" stroke-linecap="round" stroke-linejoin="round"/></svg></div>
<div class="vl" style="left:476px;top:335.8px;height:6.4px;background:rgba(0,0,0,0.14)"></div>
<div class="key" style="left:520px;width:15.6px;font-size:8.9px;line-height:14.1px;-webkit-text-stroke:0.25px #465256">⌘</div>
<div class="key" style="left:537px;width:15.1px;line-height:13.5px">K</div>
<div id="dd"></div>
<svg width="8" height="6" viewBox="0 0 8 6" style="position:absolute;left:535.5px;top:63.1px"><path d="M2.3 4.1L4 2.4L5.7 4.1" fill="none" stroke="#2a2a2c" stroke-width="1.2" stroke-linecap="round" stroke-linejoin="round"/></svg>
<div id="clip">
<div class="t nm" style="left:108.50px;top:98.56px;font-size:8.60px;line-height:10.32px;letter-spacing:0.096px;">Joseph Cleland</div>
<div class="t tk" style="left:232.50px;top:99.18px;font-size:9.00px;line-height:10.80px;letter-spacing:-0.260px;">#481</div>
<div class="t nm" style="left:108.50px;top:124.16px;font-size:8.60px;line-height:10.32px;letter-spacing:0.108px;">Ashley Whiting</div>
<div class="t tk" style="left:231.00px;top:123.78px;font-size:9.00px;line-height:10.80px;letter-spacing:0.240px;">#550</div>
<div class="t nm" style="left:108.50px;top:149.76px;font-size:8.60px;line-height:10.32px;letter-spacing:0.051px;">Hayley Barnes</div>
<div class="t tk" style="left:231.00px;top:150.38px;font-size:9.00px;line-height:10.80px;letter-spacing:0.240px;">#594</div>
<div class="t nm" style="left:108.50px;top:176.36px;font-size:8.60px;line-height:10.32px;letter-spacing:0.177px;">Katherine Aitken</div>
<div class="t tk" style="left:232.75px;top:175.98px;font-size:9.00px;line-height:10.80px;letter-spacing:-0.344px;">#617</div>
<div class="t nm" style="left:108.50px;top:200.96px;font-size:8.60px;line-height:10.32px;letter-spacing:0.141px;">Christian Robertson</div>
<div class="t tk" style="left:231.00px;top:200.58px;font-size:9.00px;line-height:10.80px;letter-spacing:0.240px;">#624</div>
<div class="t nm" style="left:108.50px;top:226.56px;font-size:8.60px;line-height:10.32px;letter-spacing:0.084px;">Rachel Waterston</div>
<div class="t tk" style="left:231.25px;top:227.18px;font-size:9.00px;line-height:10.80px;letter-spacing:0.156px;">#625</div>
<div class="t nm" style="left:108.50px;top:252.16px;font-size:8.60px;line-height:10.32px;letter-spacing:0.038px;">Danielle Millar</div>
<div class="t tk" style="left:231.25px;top:251.78px;font-size:9.00px;line-height:10.80px;letter-spacing:0.156px;">#657</div>
<div class="t nm" style="left:108.50px;top:277.76px;font-size:8.60px;line-height:10.32px;letter-spacing:0.023px;">Claire Heron</div>
<div class="t tk" style="left:231.00px;top:278.38px;font-size:9.00px;line-height:10.80px;letter-spacing:0.240px;">#660</div>
<div class="t nm" style="left:108.50px;top:304.36px;font-size:8.60px;line-height:10.32px;letter-spacing:0.125px;">Dylan Lawrence</div>
<div class="t tk" style="left:231.75px;top:303.98px;font-size:9.00px;line-height:10.80px;letter-spacing:-0.010px;">#729</div>
<div class="t ml" style="left:273.00px;top:226.82px;font-size:7.90px;line-height:9.48px;letter-spacing:0.123px;">Token ID</div>
<div class="t ml" style="left:273.00px;top:248.52px;font-size:7.90px;line-height:9.48px;letter-spacing:0.245px;">Atmosphere</div>
<div class="t mv" style="left:530.25px;top:248.52px;font-size:7.90px;line-height:9.48px;letter-spacing:0.042px;">None</div>
<div class="t ml" style="left:273.00px;top:266.52px;font-size:7.90px;line-height:9.48px;letter-spacing:-0.021px;">Name</div>
<div class="t mv" style="left:476.75px;top:266.52px;font-size:7.90px;line-height:9.48px;letter-spacing:0.154px;">Christian Robertson</div>
<div class="t ml" style="left:273.00px;top:285.42px;font-size:7.90px;line-height:9.48px;letter-spacing:0.109px;">Hat</div>
<div class="t mv" style="left:532.25px;top:285.42px;font-size:7.90px;line-height:9.48px;letter-spacing:0.109px;">Chef</div>
<div class="t ml" style="left:273.00px;top:303.32px;font-size:7.90px;line-height:9.48px;letter-spacing:-0.099px;">Face</div>
<div class="t mv" style="left:534.25px;top:303.32px;font-size:7.90px;line-height:9.48px;letter-spacing:-0.120px;">Alex</div>
<div class="t ml" style="left:273.00px;top:321.22px;font-size:7.90px;line-height:9.48px;letter-spacing:-0.003px;">Glasses</div>
<div class="t mv" style="left:530.25px;top:321.22px;font-size:7.90px;line-height:9.48px;letter-spacing:0.042px;">None</div>
<div class="t chef" style="left:110.75px;top:60.78px;font-size:10.80px;line-height:12.96px;letter-spacing:0.276px;">chef</div>
<div class="t ddt" style="left:392.40px;top:61.52px;font-size:7.90px;line-height:9.48px;letter-spacing:0.067px;">Body</div>
</div>
<div class="t ftl" style="left:107.25px;top:335.27px;font-size:7.90px;line-height:9.48px;letter-spacing:0.111px;">TinyFaces</div>
<div class="t fo" style="left:379.00px;top:334.52px;font-size:7.90px;line-height:9.48px;letter-spacing:-0.083px;">Open on OpenSea</div>
<div class="t fa" style="left:485.50px;top:334.52px;font-size:7.90px;line-height:9.48px;letter-spacing:0.268px;">Actions</div>
<div id="popsh"></div>
<div id="pop"><div id="popin">
<div class="imgbox" id="blurimg" style="background:#cd9e74"><svg width="115" height="115" viewBox="0 0 115 115"><linearGradient id="bt" x1="0" x2="115" y1="0" y2="0" gradientUnits="userSpaceOnUse"><stop offset="0.75" stop-color="#cd9e74"/><stop offset="1" stop-color="#e2c4a4"/></linearGradient><linearGradient id="bb" x1="16" x2="100" y1="0" y2="0" gradientUnits="userSpaceOnUse"><stop offset="0" stop-color="#6a904c"/><stop offset="1" stop-color="#4a9e6c"/></linearGradient><rect width="115" height="115" fill="url(#bt)"/><path d="M16 116 C18 96 24 80 34 74 L82 74 C92 80 98 96 100 116Z" fill="url(#bb)"/><ellipse cx="58" cy="54" rx="24" ry="20" fill="#c89474"/></svg></div>
<div id="veil"></div>
<div class="vl" style="left:396.2px;top:92.3px;height:8.6px;background:#3a3a3c;width:0.8px"></div>
<div class="hl" style="left:385.6px;top:106.4px;width:165px;background:rgba(0,0,0,0.085)"></div>
<div id="psel"></div>
<div class="t pi" style="left:397.90px;top:112.45px;font-size:8.50px;line-height:10.20px;letter-spacing:0.079px;">Token ID</div>
<div class="t pi" style="left:397.90px;top:131.95px;font-size:8.50px;line-height:10.20px;letter-spacing:-0.196px;">Name</div>
<div class="t pi" style="left:397.90px;top:152.45px;font-size:8.50px;line-height:10.20px;letter-spacing:0.151px;">Atmosphere</div>
<div class="t pi" style="left:397.90px;top:172.95px;font-size:8.50px;line-height:10.20px;letter-spacing:0.042px;">Body</div>
<div class="t pi" style="left:397.90px;top:194.45px;font-size:8.50px;line-height:10.20px;letter-spacing:0.072px;">Color</div>
<div class="t pi" style="left:397.90px;top:213.95px;font-size:8.50px;line-height:10.20px;letter-spacing:0.021px;">Eye Color</div>
<div class="t pi" style="left:397.90px;top:234.45px;font-size:8.50px;line-height:10.20px;letter-spacing:0.065px;">Face</div>
<div class="t srch" style="left:397.20px;top:90.45px;font-size:8.40px;line-height:10.08px;letter-spacing:-0.066px;">Search...</div>
</div></div>
</div></div>
</body>
</html>
